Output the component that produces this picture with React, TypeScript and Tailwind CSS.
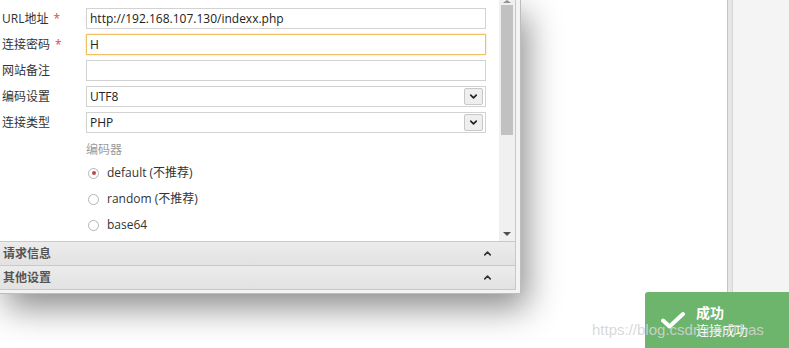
import { ChevronDown, ChevronUp } from "lucide-react";

const font = { fontFamily: '"Open Sans", "Noto Sans CJK SC", sans-serif' };

function Label({ text, required }: { text: string; required?: boolean }) {
  return (
    <div className="flex w-[86px] shrink-0 items-center pl-[2px] text-[12px] text-[#333]">
      <span>{text}</span>
      {required ? <span className="ml-[5px] text-[#e0484a]">*</span> : null}
    </div>
  );
}

function TextRow({ label, value, required, focused }: { label: string; value: string; required?: boolean; focused?: boolean }) {
  return (
    <div className="flex h-[21px] items-stretch">
      <Label text={label} required={required} />
      <div
        className={
          focused
            ? "flex w-[400px] items-center border border-[#eec06a] bg-white px-[3px] text-[12px] text-[#222] shadow-[0_0_2px_#f3d79a]"
            : "flex w-[400px] items-center border border-[#d2d2d2] bg-white px-[3px] text-[12px] text-[#222]"
        }
      >
        {value}
      </div>
    </div>
  );
}

function SelectRow({ label, value }: { label: string; value: string }) {
  return (
    <div className="flex h-[21px] items-stretch">
      <Label text={label} />
      <div className="flex w-[400px] items-center justify-between border border-[#d2d2d2] bg-white pl-[3px] pr-[2px] text-[12px] text-[#222]">
        <span>{value}</span>
        <div className="flex h-[17px] w-[19px] items-center justify-center rounded-[2px] border border-[#c8c8c8] bg-[#eeeeee]">
          <ChevronDown size={11} strokeWidth={3.5} className="text-[#222]" />
        </div>
      </div>
    </div>
  );
}

function Radio({ label, checked }: { label: string; checked?: boolean }) {
  return (
    <div className="flex h-[26px] items-center pl-[88px] text-[12px] text-[#333]">
      <span className="flex h-[11px] w-[11px] items-center justify-center rounded-full border border-[#b5b5b5] bg-white">
        {checked ? <span className="h-[4px] w-[4px] rounded-full bg-[#b84a4a]" /> : null}
      </span>
      <span className="ml-[8px]">{label}</span>
    </div>
  );
}

function Section({ title }: { title: string }) {
  return (
    <div className="flex h-[24px] items-center justify-between border-t border-[#c9c9c9] bg-gradient-to-b from-[#ececec] to-[#e2e2e2] pl-[3px] pr-[22px] text-[12px] font-bold text-[#555]">
      <span>{title}</span>
      <ChevronUp size={11} strokeWidth={3.5} className="text-[#333]" />
    </div>
  );
}

export default function App() {
  return (
    <div className="relative flex h-[348px] w-[789px] overflow-hidden bg-white" style={font}>
      <div className="w-[727px] shrink-0">
        <div className="w-[521px] border-b border-r border-[#bdbdbd] bg-[#f3f3f3] pb-[3px] pr-[4px] shadow-[6px_14px_32px_rgba(0,0,0,0.45)]">
          <div className="border-b border-r border-[#c8c8c8] bg-white">
            <div className="flex h-[241px]">
              <div className="flex-1 pt-[8px]">
                <div className="flex flex-col gap-[5px]">
                  <TextRow label="URL地址" value="http://192.168.107.130/indexx.php" required />
                  <TextRow label="连接密码" value="H" required focused />
                  <TextRow label="网站备注" value="" />
                  <SelectRow label="编码设置" value="UTF8" />
                  <SelectRow label="连接类型" value="PHP" />
                </div>
                <div className="mt-[9px] pl-[86px] text-[12px] leading-[16px] text-[#9a9a9a]">编码器</div>
                <div className="mt-[2px]">
                  <Radio label="default (不推荐)" checked />
                  <Radio label="random (不推荐)" />
                  <Radio label="base64" />
                </div>
              </div>
              <div className="flex w-[16px] flex-col items-center bg-[#f0f0f0]">
                <div className="h-0 w-0 border-x-[4px] border-b-[3px] border-x-transparent border-b-[#909090]" />
                <div className="mt-[2px] h-[130px] w-[12px] bg-[#c1c1c1]" />
                <div className="flex-1" />
                <div className="mb-[5px] h-0 w-0 border-x-[4px] border-t-[4px] border-x-transparent border-t-[#505050]" />
              </div>
            </div>
            <Section title="请求信息" />
            <Section title="其他设置" />
          </div>
        </div>
      </div>
      <div className="flex flex-1 border-l border-[#c6c6c6]">
        <div className="w-[5px] border-r border-[#d6d6d6] bg-[#e6e6e6]" />
        <div className="flex-1 bg-[#f4f4f4]" />
      </div>

      <div className="absolute left-[645px] top-[292px] flex h-[56px] w-[144px] items-center rounded-tl-[3px] bg-[#6db46d] pl-[16px] text-white">
        <svg width="24" height="18" viewBox="0 0 24 18" fill="none">
          <path d="M2 9.5 L8.5 15.5 L22 3" stroke="white" strokeWidth="4" strokeLinecap="round" strokeLinejoin="round" />
        </svg>
        <div className="ml-[11px] flex flex-col" style={{ fontFamily: '"Noto Sans CJK SC", sans-serif' }}>
          <span className="text-[14px] font-bold leading-[18px]">成功</span>
          <span className="text-[13px] leading-[17px]">连接成功</span>
        </div>
      </div>
      <div
        className="pointer-events-none absolute left-[592px] top-[319px] whitespace-nowrap text-[15px] text-[#d4d4d4]/90"
        style={{ fontFamily: '"Liberation Sans", sans-serif' }}
      >
        https://blog.csdn.net/Thas
      </div>
    </div>
  );
}
